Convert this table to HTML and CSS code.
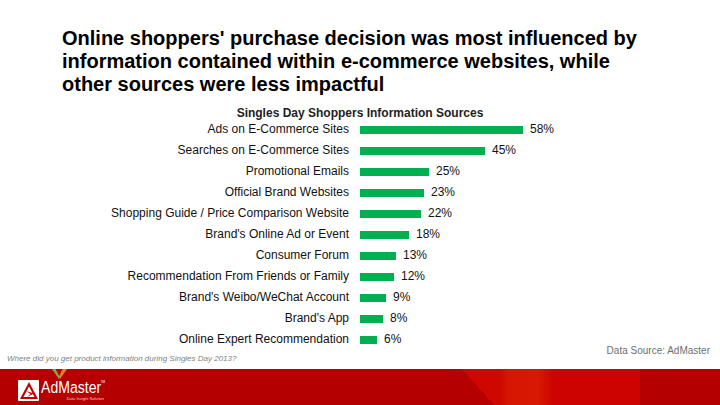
FILE: index.html
```html
<!DOCTYPE html>
<html>
<head>
<meta charset="utf-8">
<link rel="stylesheet" href="styles.css">
</head>
<body>
<div class="page">
  <h1 class="title">Online shoppers' purchase decision was most influenced by information contained within e-commerce websites, while other sources were less impactful</h1>
  <section class="chart">
    <div class="chart-title">Singles Day Shoppers Information Sources</div>
    <div class="rows">
      <div class="label">Ads on E-Commerce Sites</div><div class="bar-cell"><span class="bar" style="width:163px"></span><span class="val">58%</span></div>
      <div class="label">Searches on E-Commerce Sites</div><div class="bar-cell"><span class="bar" style="width:125px"></span><span class="val">45%</span></div>
      <div class="label">Promotional Emails</div><div class="bar-cell"><span class="bar" style="width:69px"></span><span class="val">25%</span></div>
      <div class="label">Official Brand Websites</div><div class="bar-cell"><span class="bar" style="width:64px"></span><span class="val">23%</span></div>
      <div class="label">Shopping Guide / Price Comparison Website</div><div class="bar-cell"><span class="bar" style="width:61px"></span><span class="val">22%</span></div>
      <div class="label">Brand's Online Ad or Event</div><div class="bar-cell"><span class="bar" style="width:49px"></span><span class="val">18%</span></div>
      <div class="label">Consumer Forum</div><div class="bar-cell"><span class="bar" style="width:36px"></span><span class="val">13%</span></div>
      <div class="label">Recommendation From Friends or Family</div><div class="bar-cell"><span class="bar" style="width:34px"></span><span class="val">12%</span></div>
      <div class="label">Brand's Weibo/WeChat Account</div><div class="bar-cell"><span class="bar" style="width:26px"></span><span class="val">9%</span></div>
      <div class="label">Brand's App</div><div class="bar-cell"><span class="bar" style="width:23px"></span><span class="val">8%</span></div>
      <div class="label">Online Expert Recommendation</div><div class="bar-cell"><span class="bar" style="width:17px"></span><span class="val">6%</span></div>
    </div>
  </section>
  <div class="notes">
    <p class="question">Where did you get product information during Singles Day 2013?</p>
    <p class="source">Data Source: AdMaster</p>
  </div>
  <footer class="footer">
    <div class="logo">
      <svg class="logo-v" width="15" height="10" viewBox="0 0 15 10">
        <polygon points="0,0 3.5,0 8,8.5 7,10" fill="#7cb342"/>
        <polygon points="10.5,0 15,0 8,10 7,7.5" fill="#ef7d1a"/>
      </svg>
      <svg class="logo-icon" width="21" height="21" viewBox="0 0 21 21">
        <rect x="0" y="0" width="21" height="21" rx="1" fill="#ffffff"/>
        <polygon points="11,2 20,19 2,19" fill="#c00000"/>
        <polygon points="11,6.5 16.5,17 5.5,17" fill="#ffffff"/>
        <polygon points="8,11 16,13.5 9,17 12.5,14" fill="#c00000"/>
      </svg>
      <div class="logo-text">
        <span class="brand">AdMaster</span>
        <span class="tm">TM</span>
        <span class="tagline">Data·Insight·Solution</span>
      </div>
    </div>
  </footer>
</div>
</body>
</html>
```

FILE: styles.css
```css
* { box-sizing: border-box; }
html, body { margin: 0; padding: 0; }
body {
  width: 720px;
  height: 405px;
  overflow: hidden;
  background: #ffffff;
  font-family: "Liberation Sans", Arial, sans-serif;
  color: #000;
}
.page {
  width: 720px;
  height: 405px;
  display: flex;
  flex-direction: column;
}
.title {
  margin: 0;
  width: 650px;
  padding: 27px 0 0 62px;
  font-size: 20px;
  line-height: 23px;
  font-weight: 700;
  color: #000;
}
.chart {
  margin-top: 11px;
}
.chart-title {
  width: 720px;
  text-align: center;
  font-size: 12px;
  line-height: 12px;
  font-weight: 700;
  color: #222;
}
.rows {
  display: grid;
  grid-template-columns: 349px 1fr;
  grid-auto-rows: 21px;
  column-gap: 11px;
}
.label {
  text-align: right;
  font-size: 12px;
  line-height: 21px;
  color: #111;
  white-space: nowrap;
}
.bar-cell {
  display: flex;
  align-items: center;
  gap: 7px;
}
.bar {
  display: block;
  height: 8px;
  background: #00b050;
}
.val {
  font-size: 12px;
  line-height: 21px;
  color: #111;
}
.notes {
  margin-top: -11px;
  height: 30px;
  display: flex;
  justify-content: space-between;
  padding: 0 10px 0 7px;
}
.question {
  margin: 0 0 4px;
  align-self: flex-end;
  font-size: 8px;
  line-height: 12px;
  font-style: italic;
  color: #7f7f7f;
}
.source {
  margin: 6px 0 0;
  align-self: flex-start;
  font-size: 10px;
  line-height: 12px;
  color: #6f6f6f;
}
.footer {
  flex: 1;
  background:
    linear-gradient(to top right, #b50000 50%, rgba(181,0,0,0) 50%) 462px 0 / 32px 100% no-repeat,
    linear-gradient(to right, rgba(0,0,0,0) 0 500px, #d61602 508px, #d71802 538px, rgba(0,0,0,0) 552px),
    linear-gradient(to right, rgba(0,0,0,0) 0 462px, #d00600 462px, #d00600 550px, #cc0300 552px, #cc0300 640px, rgba(0,0,0,0) 640px),
    #b50000;
  display: flex;
}
.logo {
  display: flex;
  align-items: flex-start;
  padding: 11px 0 0 18px;
  position: relative;
}
.logo-v {
  position: absolute;
  left: 52px;
  top: 0;
}
.logo-icon {
  display: block;
}
.logo-text {
  position: relative;
  width: 64px;
  height: 21px;
  margin-left: 2px;
  display: flex;
  flex-direction: column;
  align-items: flex-start;
}
.brand {
  display: inline-block;
  color: #fff;
  font-size: 16px;
  line-height: 16px;
  transform: scaleX(0.88);
  transform-origin: left center;
}
.tm {
  position: absolute;
  right: 0;
  top: 1px;
  color: #fff;
  font-size: 3px;
  line-height: 3px;
}
.tagline {
  align-self: flex-end;
  color: #f3c9c9;
  font-size: 4px;
  line-height: 5px;
  margin-right: 1px;
}
```
